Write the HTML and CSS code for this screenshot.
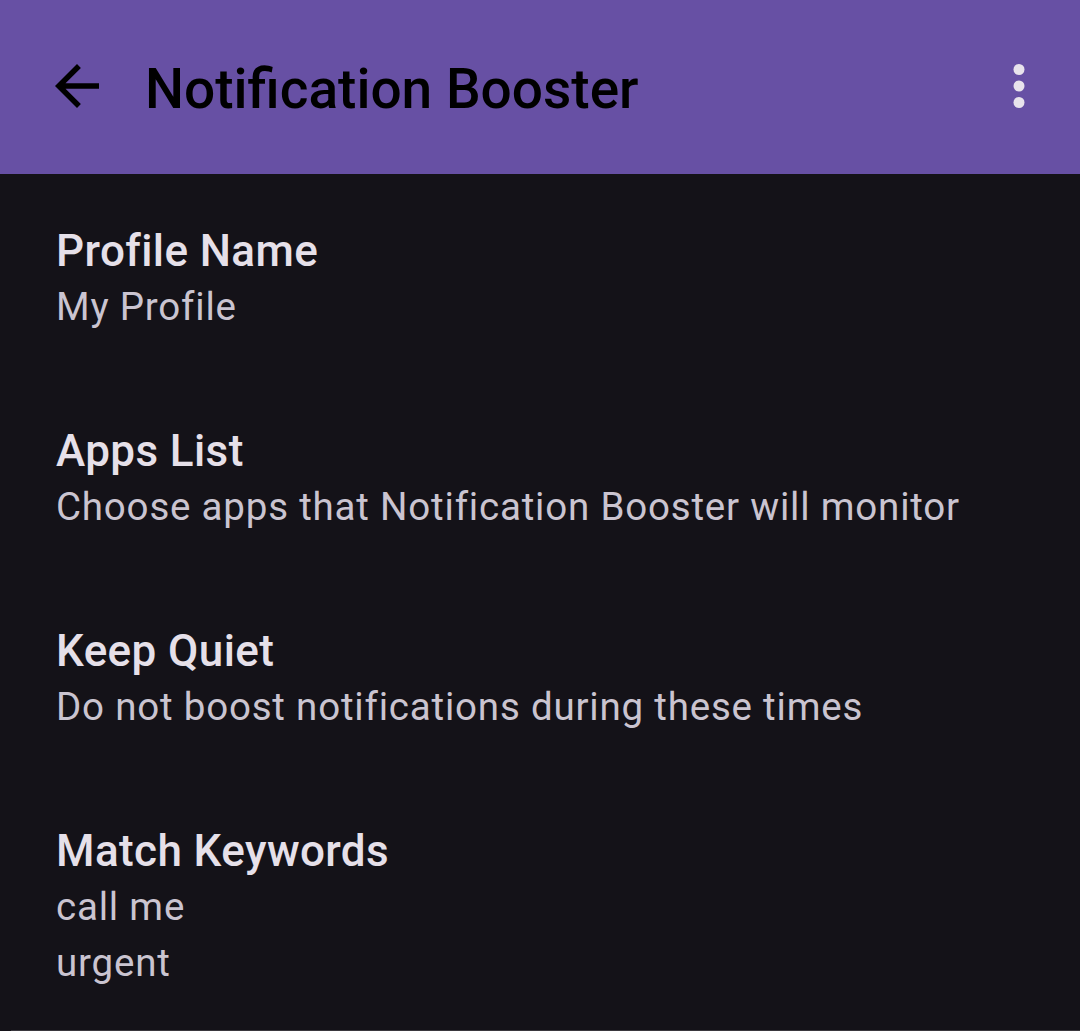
FILE: index.html
```html
<!DOCTYPE html>
<html lang="en">
<head>
<meta charset="utf-8">
<title>Notification Booster</title>
<link rel="stylesheet" href="styles.css">
</head>
<body>
<div class="screen">
  <header class="appbar">
    <button class="icon-btn back" aria-label="Back">
      <svg viewBox="0 0 24 24" width="66" height="66"><path d="M20 11H7.83l5.59-5.59L12 4l-8 8 8 8 1.41-1.41L7.83 13H20v-2z" fill="#000"/></svg>
    </button>
    <h1 class="title">Notification Booster</h1>
    <button class="icon-btn more" aria-label="More options">
      <svg viewBox="0 0 24 24" width="66" height="66"><circle cx="12" cy="6" r="2" fill="#E8E3EC"/><circle cx="12" cy="12" r="2" fill="#E8E3EC"/><circle cx="12" cy="18" r="2" fill="#E8E3EC"/></svg>
    </button>
  </header>
  <main class="prefs">
    <div class="pref">
      <div class="pref-title">Profile Name</div>
      <div class="pref-summary">My Profile</div>
    </div>
    <div class="pref">
      <div class="pref-title">Apps List</div>
      <div class="pref-summary">Choose apps that Notification Booster will monitor</div>
    </div>
    <div class="pref">
      <div class="pref-title">Keep Quiet</div>
      <div class="pref-summary">Do not boost notifications during these times</div>
    </div>
    <div class="pref">
      <div class="pref-title">Match Keywords</div>
      <div class="pref-summary">call me</div>
      <div class="pref-summary">urgent</div>
    </div>
  </main>
  <div class="bottom-edge"></div>
</div>
</body>
</html>
```

FILE: styles.css
```css
html, body {
  margin: 0;
  padding: 0;
  background: #141218;
}

body {
  font-family: Roboto, "Noto Sans", "Liberation Sans", sans-serif;
  width: 1080px;
  height: 1031px;
  overflow: hidden;
}

.screen {
  display: flex;
  flex-direction: column;
  height: 1031px;
}

.appbar {
  display: flex;
  align-items: center;
  height: 174px;
  background: #6750A4;
  padding: 0 28px 0 44px;
  box-sizing: border-box;
  flex: none;
}

.icon-btn {
  width: 66px;
  height: 66px;
  padding: 0;
  margin: 0;
  border: 0;
  background: none;
  display: flex;
  align-items: center;
  justify-content: center;
  flex: none;
}

.icon-btn svg {
  display: block;
}

.back {
  margin-top: -3px;
}

.more {
  margin-top: -2px;
}

.title {
  flex: 1;
  margin: 4px 0 0 35px;
  font-size: 55px;
  line-height: 66px;
  font-weight: 500;
  color: #000;
  letter-spacing: 0;
  white-space: nowrap;
}

.prefs {
  flex: 1;
  display: flex;
  flex-direction: column;
}

.pref {
  padding: 49px 56px 39px 56px;
}

.pref-title {
  font-size: 44px;
  line-height: 56px;
  font-weight: 500;
  color: #E6E0E9;
  letter-spacing: 0.4px;
}

.pref-summary {
  font-size: 38.5px;
  line-height: 56px;
  font-weight: 400;
  color: #CAC4D0;
  letter-spacing: 0.8px;
}

.bottom-edge {
  height: 2px;
  margin-left: 11px;
  background: #3A383E;
  flex: none;
}
```
